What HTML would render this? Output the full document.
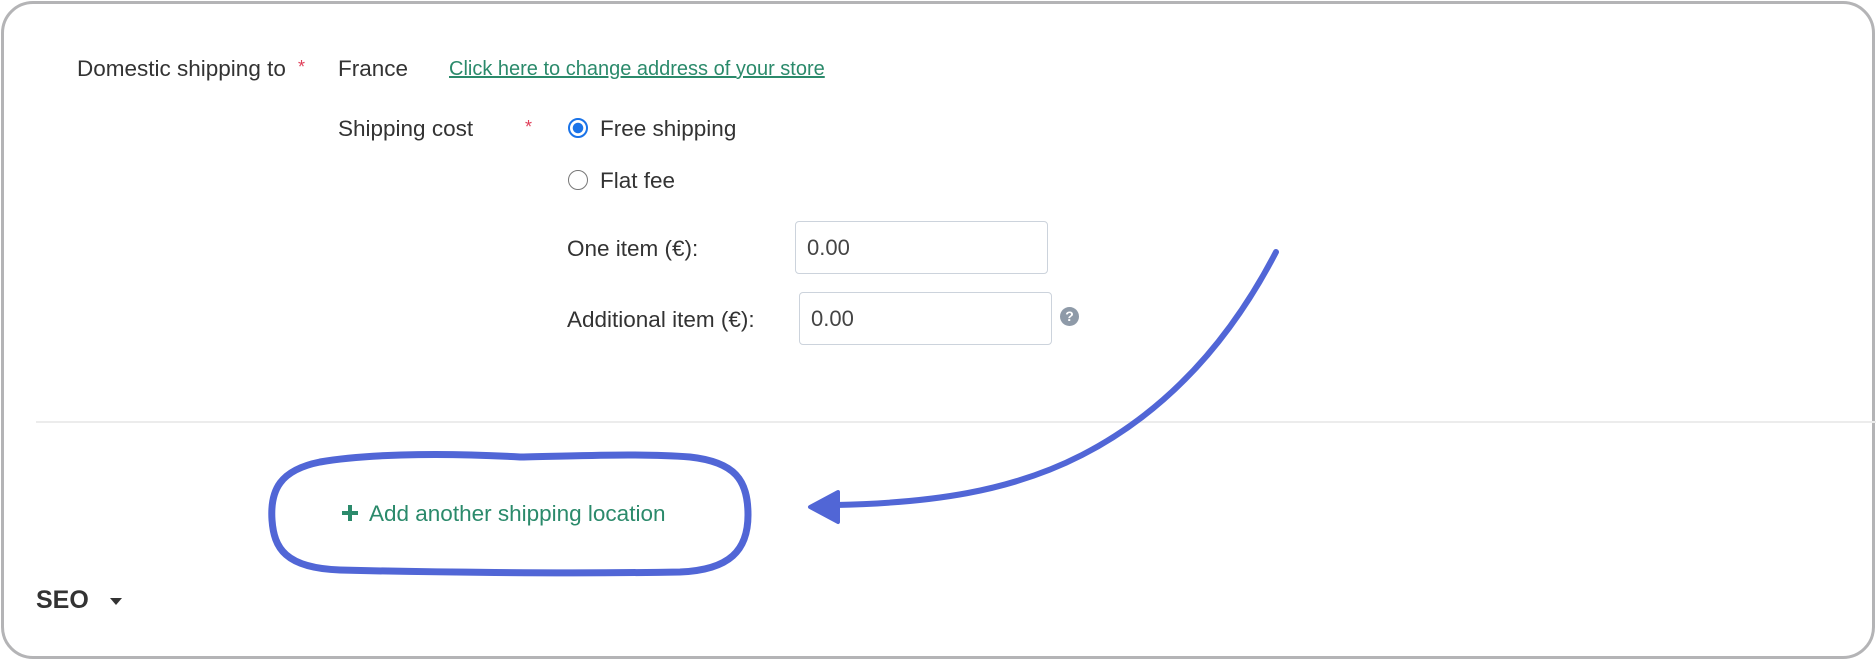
<!DOCTYPE html>
<html><head><meta charset="utf-8"><style>
body{margin:0;width:1876px;height:660px;background:#fff;font-family:"Liberation Sans",sans-serif;color:#333;position:relative;overflow:hidden}
.frame{position:absolute;left:1px;top:1px;width:1868px;height:652px;border:3px solid #b4b4b6;border-radius:32px;}
.t{position:absolute;font-size:22.5px;white-space:nowrap}
.star{color:#e0405a;font-size:18px;position:absolute}
.radio{position:absolute;width:20px;height:20px;border-radius:50%;border:1.5px solid #777;box-sizing:border-box}
.inp{position:absolute;border:1.5px solid #ccd3dc;border-radius:4px;box-sizing:border-box;font-size:22px;color:#444;padding-left:11px;line-height:52px}
</style></head><body>
<div class="frame"></div>
<div class="t" style="left:77px;top:56px">Domestic shipping to</div>
<div class="star" style="left:298px;top:57px">*</div>
<div class="t" style="left:338px;top:56px">France</div>
<div class="t" style="left:449px;top:58px;font-size:20px;color:#2b8a6b;text-decoration:underline">Click here to change address of your store</div>
<div class="t" style="left:338px;top:116px">Shipping cost</div>
<div class="star" style="left:525px;top:117px">*</div>
<div class="radio" style="left:568px;top:118px;border:2px solid #1a73e8;background:radial-gradient(circle,#1a73e8 0 5px,#fff 5.5px)"></div>
<div class="t" style="left:600px;top:116px">Free shipping</div>
<div class="radio" style="left:568px;top:170px"></div>
<div class="t" style="left:600px;top:168px">Flat fee</div>
<div class="t" style="left:567px;top:236px">One item (€):</div>
<div class="inp" style="left:795px;top:221px;width:253px;height:53px">0.00</div>
<div class="t" style="left:567px;top:307px">Additional item (€):</div>
<div class="inp" style="left:799px;top:292px;width:253px;height:53px">0.00</div>
<div style="position:absolute;left:1060px;top:307px;width:19px;height:19px;border-radius:50%;background:#8e9aa8;color:#fff;font-size:14px;font-weight:bold;text-align:center;line-height:19px">?</div>
<div style="position:absolute;left:36px;top:421px;width:1840px;height:2px;background:#ececec"></div>
<div style="position:absolute;left:342px;top:511px;width:16px;height:4px;background:#2b8a6b"></div>
<div style="position:absolute;left:348px;top:505px;width:4px;height:16px;background:#2b8a6b"></div>
<div class="t" style="left:369px;top:501px;color:#2b8a6b">Add another shipping location</div>
<div class="t" style="left:36px;top:586px;font-size:25px;font-weight:bold;color:#333">SEO</div>
<div style="position:absolute;left:110px;top:598px;width:0;height:0;border-left:6px solid transparent;border-right:6px solid transparent;border-top:7px solid #333"></div>
<svg width="1876" height="660" style="position:absolute;left:0;top:0" fill="none" stroke="#5166d6" stroke-linecap="round" stroke-linejoin="round">
<path d="M1276 252 C1220 360 1150 420 1082 455 C1010 492 930 503 836 505" stroke-width="6"/>
<path d="M838 492 L810 507 L838 522 Z" fill="#5166d6" stroke-width="4"/>
<path d="M520 457 C430 452 360 455 320 462 C280 470 270 490 272 520 C274 548 285 568 340 570 C420 572 560 574 680 572 C730 570 748 550 748 515 C748 480 735 462 690 457 C640 453 580 456 520 457 Z" stroke-width="7"/>
</svg>
</body></html>
